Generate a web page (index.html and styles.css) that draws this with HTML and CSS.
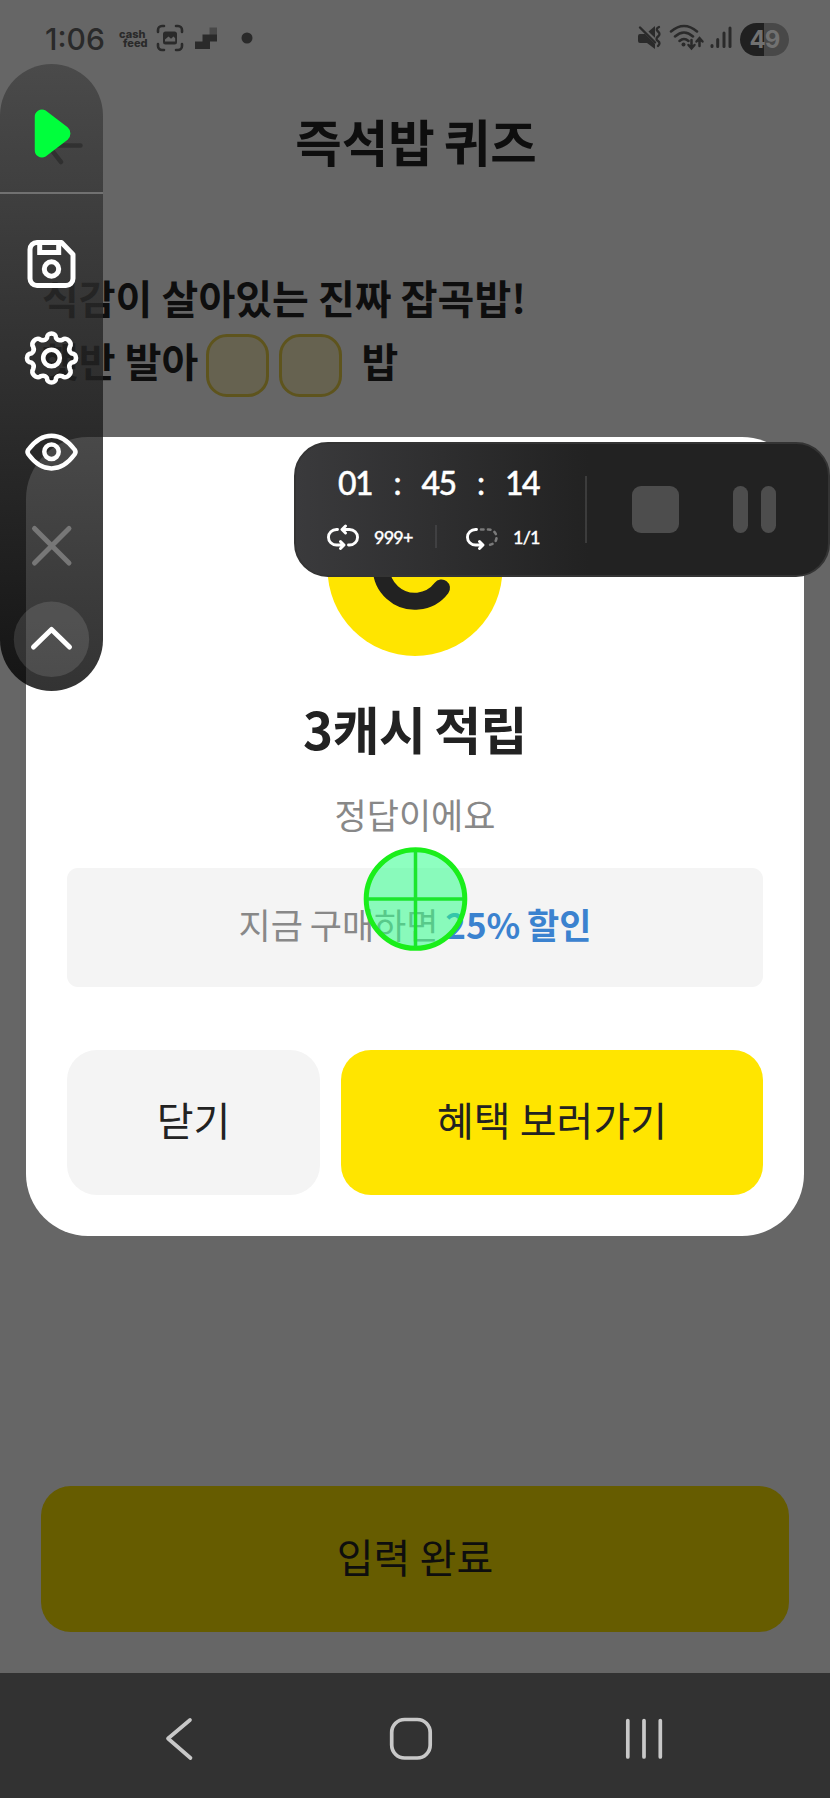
FILE: index.html
```html
<!DOCTYPE html>
<html lang="ko">
<head>
<meta charset="utf-8">
<title>즉석밥 퀴즈</title>
<link rel="stylesheet" href="styles.css">
</head>
<body>
<div class="screen">
  <header class="status">
    <span class="clock">1:06</span>
    <span class="feed"><span>cash</span><span class="feed-low">feed</span></span>
    <svg class="notif" width="106" height="30" viewBox="0 0 106 30">
      <g fill="none" stroke="#2a2a2a" stroke-width="2.6" stroke-linecap="round">
        <path d="M2 8V6a4 4 0 0 1 4-4h2M20 2h2a4 4 0 0 1 4 4v2M26 20v2a4 4 0 0 1-4 4h-2M8 26H6a4 4 0 0 1-4-4v-2"/>
      </g>
      <rect x="7" y="7.500" width="14" height="13" rx="2.500" fill="#2a2a2a"/>
      <path d="M9 17.500v-2l3.500-3 2.500 2.300 2.500-2.300 1.700 1.700v3.300z" fill="#666"/>
      <path d="M53.500 3.500H61V11h-7.500z" fill="#484848"/>
      <path d="M39 17.500h7.500V10.500H61V17.500h-7V25H39z" fill="#2a2a2a"/>
      <circle cx="91" cy="14" r="5.500" fill="#2a2a2a"/>
    </svg>
    <svg class="signals" width="100" height="30" viewBox="0 0 100 30">
      <path d="M11 8l7-6v12z" fill="#2a2a2a"/>
      <path d="M1 12q0-2 2-2h5l10 10v5l-8-6H3a2 2 0 0 1-2-2z" fill="#2a2a2a"/>
      <path d="M4 1.500l15 15" stroke="#666" stroke-width="2"/>
      <path d="M3 3.500l15 15" stroke="#2a2a2a" stroke-width="2.400" stroke-linecap="round"/>
      <path d="M22 3q-4 2-1 4.500t0 5 0 4.500 0 5" fill="none" stroke="#2a2a2a" stroke-width="2.300" stroke-linecap="round"/>
      <g fill="none" stroke="#2a2a2a" stroke-width="2.500" stroke-linecap="round">
        <path d="M34 7.500q13-11 26 0M38 12.500q9-8 18 0M42.500 17q4.500-4 9 0"/>
        <path d="M54.500 16v8m-3-3l3 3.300 3-3.300M62.500 22v-7.500m-3 3l3-3.300 3 3.300"/>
        <path d="M75 21.500v1M80.700 15.500v7M87 9v13.500M93 4v18.500" stroke-width="3"/>
      </g>
      <circle cx="46.500" cy="20.500" r="2" fill="#2a2a2a"/>
    </svg>
    <span class="battery">49</span>
  </header>

  <div class="titlebar">
    <svg class="back" width="36" height="40" viewBox="0 0 36 40"><path d="M33.500 20.500H5M17 4L1 20.500l13 16.500" fill="none" stroke="#0c0c0c" stroke-width="4.500" stroke-linecap="round" stroke-linejoin="round"/></svg>
    <h1 class="title">즉석밥 퀴즈</h1>
  </div>

  <main class="quiz">
    <p class="line">식감이 살아있는 진짜 잡곡밥!</p>
    <p class="line second">햇반 발아<span class="blank"></span><span class="blank"></span><span class="tail">밥</span></p>
  </main>

  <div class="submit">입력 완료</div>

  <nav class="nav">
    <svg width="830" height="125" viewBox="0 0 830 125" fill="none" stroke="#c8c8c8" stroke-width="3.700" stroke-linecap="round" stroke-linejoin="round">
      <path d="M190 47L168 65.500l22.500 19.500"/>
      <rect x="391.700" y="46.500" width="38.500" height="38.500" rx="13"/>
      <path d="M627.800 47.500v36.500M644 47.500v36.500M660.300 47.500v36.500"/>
    </svg>
  </nav>

  <section class="modal">
    <svg class="coin" width="176" height="176" viewBox="0 0 176 176">
      <circle cx="88" cy="87.500" r="87.500" fill="#ffe500"/>
      <path d="M114.500 66.500A33.500 33.500 0 1 0 114.500 107" fill="none" stroke="#222" stroke-width="17" stroke-linecap="round"/>
    </svg>
    <h2 class="reward">3캐시 적립</h2>
    <p class="answer">정답이에요</p>
    <div class="offer">지금 구매하면 <b>25% 할인</b></div>
    <div class="actions">
      <div class="btn close">닫기</div>
      <div class="btn go">혜택 보러가기</div>
    </div>
  </section>

  <svg class="target" width="106" height="106" viewBox="0 0 106 106">
    <circle cx="53.500" cy="53" r="49.300" fill="#32ff8c" fill-opacity=".55" stroke="#1aee1a" stroke-width="5"/>
    <path d="M53.500 5v96M5 53h96" stroke="#1be62c" stroke-width="3.500"/>
  </svg>

  <aside class="tools">
    <div class="play">
      <svg width="103" height="128" viewBox="0 0 103 128"><path d="M41 53v33a1 1 0 0 0 1.500 1L63.500 71a2 2 0 0 0 0-3L42.500 52a1 1 0 0 0-1.500 1z" fill="#00ff3c" stroke="#00ff3c" stroke-width="12.500" stroke-linejoin="round"/></svg>
    </div>
    <svg class="toolset" width="103" height="497" viewBox="0 194 103 497" fill="none" stroke="#fff" stroke-width="5" stroke-linecap="round" stroke-linejoin="round">
      <path d="M37 242.500h24.500l11.500 12v24a7 7 0 0 1-7 7H37a7 7 0 0 1-7-7v-29a7 7 0 0 1 7-7z"/>
      <path d="M39.700 243v9.500h19v-9.500" stroke-linejoin="miter"/>
      <circle cx="51.500" cy="269" r="7.200"/>
      <g transform="translate(51.500 358)" stroke-width="4.600">
        <path d="M-4.500-20C-5-26 5-26 4.500-20Q7-16.500 11.300-18.400C15-21.500 21.500-15 18.400-11.300Q16.500-7 20-4.500C26-5 26 5 20 4.500Q16.500 7 18.400 11.300C21.500 15 15 21.500 11.300 18.400Q7 16.500 4.500 20C5 26-5 26-4.500 20Q-7 16.500-11.300 18.400C-15 21.500-21.500 15-18.400 11.300Q-16.500 7-20 4.500C-26 5-26-5-20-4.500Q-16.500-7-18.400-11.300C-21.500-15-15-21.500-11.300-18.400Q-7-16.500-4.500-20Z"/>
        <circle r="8.300"/>
      </g>
      <path d="M28.500 449.500C42 431 61 431 74.500 449.500Q76.500 452 74.500 454.500C61 473 42 473 28.500 454.500Q26.500 452 28.500 449.500Z" stroke-width="4.500"/>
      <circle cx="51.500" cy="451.700" r="7.200" stroke-width="4.500"/>
      <path d="M34.500 528.500l34.500 34.500M69 528.500l-34.500 34.500" stroke="#777"/>
      <circle cx="51.500" cy="639.300" r="37.700" fill="#fff" fill-opacity=".12" stroke="none"/>
      <path d="M33.500 647l18-17.500 18 17.500"/>
    </svg>
  </aside>

  <aside class="recorder">
    <div class="stats">
      <div class="timer"><span class="pair">01</span><span class="colon">:</span><span class="pair">45</span><span class="colon">:</span><span class="pair">14</span></div>
      <div class="loops">
        <svg width="34" height="26" viewBox="0 0 34 26" fill="none" stroke="#fff" stroke-width="2.900" stroke-linecap="round" stroke-linejoin="round">
          <path d="M11.500 5.500h-1a8 7.700 0 0 0 0 15.500h7M14.500 17.500l3.500 3.500-3.500 3.500M22.500 21h1a8 7.700 0 0 0 0-15.500h-7M19.500 2L16 5.500 19.500 9"/>
        </svg>
        <span class="count all">999+</span>
        <i class="sep"></i>
        <svg width="34" height="26" viewBox="0 0 34 26" fill="none" stroke="#fff" stroke-width="2.900" stroke-linecap="round" stroke-linejoin="round">
          <path d="M11.500 5.500h-1a8 7.700 0 0 0 0 15.500h7M14.500 17.500l3.500 3.500-3.500 3.500"/>
          <path d="M16 5.500h7.500a8 7.700 0 0 1 0 15.500h-2" stroke="#7a7a7a" stroke-width="2.600" stroke-dasharray="2.500 4.500"/>
        </svg>
        <span class="count">1/1</span>
      </div>
    </div>
    <div class="controls"><i class="stop"></i><i class="pause"></i></div>
  </aside>
</div>
</body>
</html>
```

FILE: styles.css
```css
* { box-sizing: border-box; }
body { margin: 0; }
h1, h2, p { margin: 0; }

.screen {
  position: relative;
  width: 830px;
  height: 1798px;
  overflow: hidden;
  display: flex;
  flex-direction: column;
  background: #666;
  color: #0e0e0e;
  font-family: "Noto Sans CJK KR", sans-serif;
}

/* Status bar */
.status {
  height: 78px;
  padding: 0 41px 0 45px;
  display: flex;
  align-items: center;
  color: #2a2a2a;
}
.clock {
  width: 74px;
  font: 500 30px/36px Inter, sans-serif;
  white-space: nowrap;
}
.feed {
  width: 37px;
  display: flex;
  flex-direction: column;
  font: 800 11px/9px Inter, sans-serif;
}
.feed-low { padding-left: 4px; }
.notif { margin: 0 auto 0 0; }
.signals { margin-right: 3px; }
.battery {
  width: 49px;
  height: 33px;
  border-radius: 17px;
  background: linear-gradient(90deg, #202020 48%, #484848 48%);
  color: #717171;
  font: 700 24px/33px Inter, sans-serif;
  text-align: center;
  letter-spacing: -1px;
}

/* Title */
.titlebar {
  height: 124px;
  padding: 0 47px;
  display: flex;
  align-items: center;
}
.back { flex: none; margin-top: 10px; }
.title {
  flex: 1;
  margin-right: 34px;
  text-align: center;
  font-size: 50.500px;
  line-height: 72px;
  font-weight: 700;
  word-spacing: -5px;
}

/* Quiz sentence */
.quiz {
  flex: 1;
  padding: 65px 42px 0;
  font-size: 40px;
  font-weight: 700;
  word-spacing: -2px;
}
.line {
  height: 63px;
  line-height: 60px;
  white-space: nowrap;
}
.second { display: flex; }
.blank {
  width: 63px;
  height: 63px;
  margin: 4px 0 0 10px;
  border: 3px solid #5e541d;
  border-radius: 21px;
  background: #666250;
}
.second .blank:first-of-type { margin-left: 8px; }
.tail { margin-left: 19px; }

.submit {
  height: 146px;
  margin: 0 41px 41px;
  border-radius: 30px;
  background: #665c00;
  text-align: center;
  font-size: 40px;
  line-height: 140px;
  word-spacing: -2px;
}
.nav {
  height: 125px;
  background: #323232;
}
.nav svg { display: block; }

/* Result dialog */
.modal {
  position: absolute;
  left: 26px;
  top: 437px;
  width: 778px;
  height: 799px;
  padding: 44px 41px 41px;
  border-radius: 62px;
  background: #fff;
  display: flex;
  flex-direction: column;
  align-items: center;
  color: #222;
}
.reward {
  margin-top: 35px;
  font-size: 51px;
  line-height: 72px;
  font-weight: 700;
  word-spacing: -5px;
  letter-spacing: -.5px;
}
.answer {
  margin-top: 24px;
  font-size: 35px;
  line-height: 52px;
  color: #888;
}
.offer {
  width: 100%;
  height: 119px;
  margin-top: 28px;
  border-radius: 11px;
  background: #f4f4f4;
  text-align: center;
  font-size: 35px;
  line-height: 112px;
  word-spacing: -3px;
  color: #888;
}
.offer b { color: #3b82cf; }
.actions {
  width: 100%;
  margin-top: auto;
  display: flex;
  gap: 21px;
}
.btn {
  height: 145px;
  border-radius: 30px;
  text-align: center;
  font-size: 40px;
  line-height: 138px;
  word-spacing: -2px;
}
.close { width: 253px; background: #f4f4f4; }
.go { flex: 1; background: #ffe500; }

/* Tap marker */
.target { position: absolute; left: 362px; top: 846px; }

/* Floating tool strip */
.tools {
  position: absolute;
  left: 0;
  top: 64px;
  width: 103px;
  height: 627px;
  border-radius: 52px;
  overflow: hidden;
  background: linear-gradient(rgba(67, 67, 67, .8), rgba(0, 0, 0, .8));
}
.play {
  height: 130px;
  border-bottom: 2px solid #717171;
}
.tools svg { display: block; }

/* Floating recorder */
.recorder {
  position: absolute;
  left: 294px;
  top: 442px;
  width: 536px;
  height: 135px;
  padding: 0 52px 0 30px;
  border: 2px solid #343434;
  border-radius: 34px;
  background: linear-gradient(90deg, #3a3a3c, #222 55%);
  color: #fff;
  display: flex;
  align-items: center;
  font-family: Lato, sans-serif;
}
.stats {
  width: 261px;
  height: 67px;
  border-right: 2px solid #3c3c3c;
  display: flex;
  flex-direction: column;
  justify-content: center;
  gap: 21px;
}
.timer {
  display: flex;
  margin-top: -7px;
  padding-left: 8px;
  font-size: 32px;
  line-height: 40px;
  font-weight: 500;
  letter-spacing: -1.500px;
  -webkit-text-stroke: .4px #fff;
}
.pair { width: 42px; text-align: center; }
.colon { width: 41.500px; text-align: center; }
.loops {
  display: flex;
  align-items: center;
}
.count {
  margin-left: 14px;
  font-size: 18px;
  line-height: 26px;
  font-weight: 500;
  letter-spacing: -.8px;
  -webkit-text-stroke: .3px #fff;
}
.all { width: 61px; }
.sep {
  width: 2px;
  height: 23px;
  margin-right: 28px;
  background: #404042;
}
.controls {
  flex: 1;
  display: flex;
  justify-content: space-between;
  padding-left: 45px;
}
.stop {
  width: 47px;
  height: 47px;
  border-radius: 9px;
  background: #4d4d4d;
}
.pause {
  width: 43px;
  height: 47px;
  display: flex;
  justify-content: space-between;
}
.pause::before, .pause::after {
  content: "";
  width: 15px;
  border-radius: 8px;
  background: #4d4d4d;
}
```
